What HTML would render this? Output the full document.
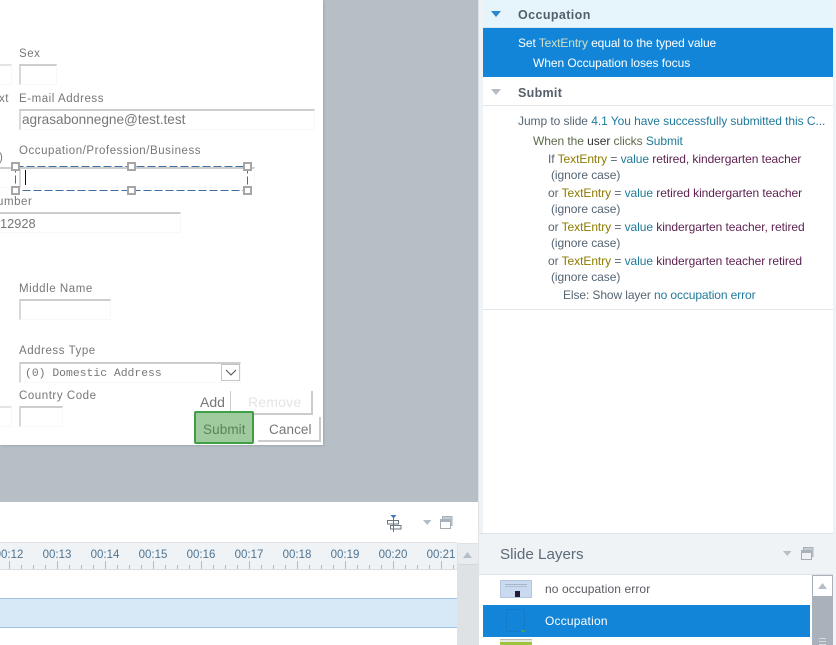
<!DOCTYPE html>
<html>
<head>
<meta charset="utf-8">
<style>
html,body{margin:0;padding:0;background:#fff}
#p{position:relative;width:836px;height:645px;overflow:hidden;background:#fff;font-family:"Liberation Sans",sans-serif}
#p div{position:absolute}
.t{white-space:nowrap;font-size:12px;line-height:16px;letter-spacing:-.06px}
.l{white-space:nowrap;font-size:11.5px;line-height:14px;color:#777;letter-spacing:.55px}
.f{box-sizing:border-box;background:#fff;border:1px solid #f8f8f8;border-top:2px solid #cdcdcd;border-left:2px solid #d8d8d8}
.h{box-sizing:border-box;width:9px;height:9px;background:#fff;border:2px solid #a6a6a6}
.g{color:#566573}.b{color:#1f7a99}.y{color:#8c7a00}.m{color:#5c1f4f}
.c{white-space:nowrap;font-size:11.5px;line-height:14px;color:#4f7391;width:48px;text-align:center}
</style>
</head>
<body>
<div id="p">
<!-- stage -->
<div style="left:0;top:0;width:478px;height:502px;background:#b6bec6"></div>
<div style="left:0;top:0;width:323px;height:445px;background:#fff;box-shadow:1px 1px 2px #a0a8b0"></div>

<div class="l" style="left:19px;top:47px">Sex</div>
<div class="f" style="left:-20px;top:64px;width:32px;height:21px;border-top-color:#e4e4e4"></div>
<div class="f" style="left:19px;top:64px;width:38px;height:21px"></div>
<div class="l" style="left:-1px;top:92px">xt</div>
<div class="l" style="left:19px;top:92px">E-mail Address</div>
<div class="f" style="left:19px;top:109px;width:296px;height:21px"></div>
<div class="t" style="left:22px;top:112px;font-size:13.6px;letter-spacing:0;color:#777">agrasabonnegne@test.test</div>
<div class="l" style="left:-1px;top:151px;letter-spacing:0">)</div>
<div class="l" style="left:19px;top:144px">Occupation/Profession/Business</div>
<div class="f" style="left:-20px;top:167px;width:36px;height:21px;border-left:0"></div>
<div class="f" style="left:19px;top:167px;width:236px;height:21px"></div>
<div style="left:25px;top:170px;width:1px;height:15px;background:#111"></div>
<svg style="position:absolute;left:10px;top:160px" width="245" height="36">
  <path d="M5.500 6.500H237.500V30.500H5.500Z" fill="none" stroke="#3f6d9e" stroke-width="1" stroke-dasharray="8 3"/>
</svg>
<div class="h" style="left:11px;top:162px"></div>
<div class="h" style="left:127px;top:162px"></div>
<div class="h" style="left:243px;top:162px"></div>
<div class="h" style="left:11px;top:186px"></div>
<div class="h" style="left:127px;top:186px"></div>
<div class="h" style="left:243px;top:186px"></div>
<div class="l" style="left:-3px;top:195px">umber</div>
<div class="f" style="left:-20px;top:212px;width:201px;height:21px;border-left:0"></div>
<div class="t" style="left:0;top:216px;font-size:12.8px;letter-spacing:0;color:#777">12928</div>

<div class="l" style="left:19px;top:282px">Middle Name</div>
<div class="f" style="left:19px;top:299px;width:92px;height:21px"></div>
<div class="l" style="left:19px;top:344px">Address Type</div>
<div class="f" style="left:19px;top:362px;width:222px;height:21px"></div>
<div class="t" style="left:25px;top:366px;font-family:'Liberation Mono',monospace;font-size:11.4px;letter-spacing:0;color:#777">(0) Domestic Address</div>
<div style="left:221px;top:364px;width:19px;height:17px;box-sizing:border-box;border:1px solid #c4c4c4;background:#fff">
  <svg style="position:absolute;left:3px;top:3px" width="12" height="9"><path d="M1 2l5 5 5-5" fill="none" stroke="#555" stroke-width="1.100"/></svg>
</div>
<div class="l" style="left:19px;top:389px">Country Code</div>
<div class="f" style="left:-20px;top:406px;width:32px;height:21px;border-top-color:#e4e4e4"></div>
<div class="f" style="left:19px;top:406px;width:44px;height:21px"></div>
<div class="t" style="left:200px;top:394px;font-size:14px;letter-spacing:0;color:#777">Add</div>
<div style="left:230px;top:391px;width:83px;height:24px;box-sizing:border-box;border-left:1px solid #ccc;border-right:2px solid #ccc;border-bottom:2px solid #ccc"></div>
<div class="t" style="left:248px;top:394px;font-size:14px;color:#e4e4e4;letter-spacing:.2px">Remove</div>
<div style="left:194px;top:411px;width:60px;height:33px;box-sizing:border-box;background:#9fcb9f;border:2px solid #3f9f46;border-radius:2px"></div>
<div class="t" style="left:203px;top:422px;font-size:13.5px;color:#5c815c;letter-spacing:.1px">Submit</div>
<div style="left:258px;top:417px;width:63px;height:25px;box-sizing:border-box;border-right:2px solid #ccc;border-bottom:2px solid #ccc"></div>
<div class="t" style="left:269px;top:422px;font-size:13.5px;color:#777;letter-spacing:.1px">Cancel</div>

<!-- timeline -->
<div style="left:0;top:502px;width:478px;height:143px;background:#fff"></div>
<svg style="position:absolute;left:385px;top:513px" width="20" height="20">
  <path d="M8.500 2v17" stroke="#4c78ab" stroke-width="1" fill="none"/>
  <path d="M5.500 2h6l-3 3.500z" fill="#3f76bd"/>
  <rect x="2.500" y="7.500" width="11" height="3.500" fill="none" stroke="#6b7680"/>
  <rect x="5.500" y="12.500" width="10.500" height="3.500" fill="none" stroke="#6b7680"/>
</svg>
<svg style="position:absolute;left:422px;top:519px" width="11" height="7"><path d="M1 1h8.500l-4.250 5z" fill="#b5bec6"/></svg>
<svg style="position:absolute;left:439px;top:515px" width="15" height="15">
  <rect x="3.500" y="1.500" width="9.500" height="9" fill="#c4cbd1" stroke="#a9b2ba"/>
  <rect x="1.500" y="4.500" width="10" height="9" fill="#fff" stroke="#a3acb4"/>
  <rect x="1" y="4" width="11" height="3" fill="#a9b2ba"/>
</svg>

<div style="left:0;top:542px;width:457px;height:28px;box-sizing:border-box;background:#f0f3f6;border-top:1px solid #e0e2e5;border-bottom:1px solid #dcdfe2"></div>
<div class="c" style="left:-15px;top:548px">00:12</div>
<div class="c" style="left:33px;top:548px">00:13</div>
<div class="c" style="left:81px;top:548px">00:14</div>
<div class="c" style="left:129px;top:548px">00:15</div>
<div class="c" style="left:177px;top:548px">00:16</div>
<div class="c" style="left:225px;top:548px">00:17</div>
<div class="c" style="left:273px;top:548px">00:18</div>
<div class="c" style="left:321px;top:548px">00:19</div>
<div class="c" style="left:369px;top:548px">00:20</div>
<div class="c" style="left:417px;top:548px">00:21</div>
<svg style="position:absolute;left:0;top:560px" width="457" height="9">
  <path stroke="#b4bac0" stroke-width="1" fill="none" d="M9.500 1v8M57.500 1v8M105.500 1v8M153.500 1v8M201.500 1v8M249.500 1v8M297.500 1v8M345.500 1v8M393.500 1v8M441.500 1v8M21.500 5v4M33.500 5v4M45.500 5v4M69.500 5v4M81.500 5v4M93.500 5v4M117.500 5v4M129.500 5v4M141.500 5v4M165.500 5v4M177.500 5v4M189.500 5v4M213.500 5v4M225.500 5v4M237.500 5v4M261.500 5v4M273.500 5v4M285.500 5v4M309.500 5v4M321.500 5v4M333.500 5v4M357.500 5v4M369.500 5v4M381.500 5v4M405.500 5v4M417.500 5v4M429.500 5v4M453.500 5v4"/>
</svg>
<div style="left:0;top:598px;width:457px;height:30px;box-sizing:border-box;background:#d7e8f7;border-top:1px solid #9fc3e3;border-bottom:1px solid #9fc3e3"></div>
<div style="left:457px;top:543px;width:21px;height:102px;background:#dfe2e5"></div>
<div style="left:458px;top:544px;width:20px;height:20px;background:#e9ecef;border-bottom:1px solid #d2d6da"></div>
<svg style="position:absolute;left:462px;top:551px" width="12" height="8"><path d="M5.500 1l4.500 6h-9z" fill="#b5bec6"/></svg>

<!-- right panel -->
<div style="left:478px;top:0;width:358px;height:645px;background:#fff"></div>
<div style="left:478px;top:0;width:1px;height:645px;background:#dfe2e5"></div>
<div style="left:479px;top:0;width:4px;height:533px;background:#f0f3f6"></div>
<div style="left:833px;top:0;width:3px;height:645px;background:#f0f3f6"></div>

<div style="left:483px;top:0;width:350px;height:27px;background:#e6f4fb"></div>
<div style="left:483px;top:27px;width:350px;height:1px;background:#d4e6f0"></div>
<svg style="position:absolute;left:491px;top:11px" width="12" height="8"><path d="M0 0h10l-5 6z" fill="#2a86d0"/></svg>
<div class="t" style="left:518px;top:7px;font-weight:bold;font-size:12.5px;color:#555f69;letter-spacing:.4px">Occupation</div>
<div style="left:483px;top:28px;width:350px;height:49px;background:#1385d8"></div>
<div class="t" style="left:518px;top:35px;color:#fff;letter-spacing:-.1px">Set <span style="color:#cfe0c8">TextEntry</span> equal to the typed value</div>
<div class="t" style="left:533px;top:55px;color:#fff">When Occupation loses focus</div>

<svg style="position:absolute;left:491px;top:89px" width="12" height="8"><path d="M0 0h10l-5 6z" fill="#b5bbc1"/></svg>
<div class="t" style="left:518px;top:85px;font-weight:bold;font-size:12.5px;color:#555f69;letter-spacing:.3px">Submit</div>
<div style="left:483px;top:105px;width:350px;height:1px;background:#e3e6e9"></div>

<div class="t g" style="left:518px;top:113px;letter-spacing:-.06px">Jump to slide <span class="b">4.1 You have successfully submitted this C...</span></div>
<div class="t" style="left:533px;top:133px;color:#5d6a4a">When the <span style="color:#333">user</span> clicks <span class="b">Submit</span></div>
<div class="t g" style="left:548px;top:151px">If <span class="y">TextEntry</span> = <span class="b">value</span> <span class="m">retired, kindergarten teacher</span></div>
<div class="t g" style="left:551px;top:167px">(ignore case)</div>
<div class="t g" style="left:548px;top:185px">or <span class="y">TextEntry</span> = <span class="b">value</span> <span class="m">retired kindergarten teacher</span></div>
<div class="t g" style="left:551px;top:201px">(ignore case)</div>
<div class="t g" style="left:548px;top:219px">or <span class="y">TextEntry</span> = <span class="b">value</span> <span class="m">kindergarten teacher, retired</span></div>
<div class="t g" style="left:551px;top:235px">(ignore case)</div>
<div class="t g" style="left:548px;top:253px">or <span class="y">TextEntry</span> = <span class="b">value</span> <span class="m">kindergarten teacher retired</span></div>
<div class="t g" style="left:551px;top:269px">(ignore case)</div>
<div class="t g" style="left:563px;top:287px;letter-spacing:-.1px">Else: Show layer <span class="b">no occupation error</span></div>
<div style="left:483px;top:309px;width:350px;height:1px;background:#e3e6e9"></div>

<!-- slide layers -->
<div style="left:479px;top:533px;width:354px;height:42px;box-sizing:border-box;background:#f0f3f6;border-top:1px solid #dfe2e5;border-bottom:1px solid #dfe2e5"></div>
<div class="t" style="left:500px;top:545px;font-size:15.2px;line-height:20px;color:#5c6b78;letter-spacing:0">Slide Layers</div>
<svg style="position:absolute;left:782px;top:550px" width="11" height="7"><path d="M1 1h8.500l-4.250 5z" fill="#b5bec6"/></svg>
<svg style="position:absolute;left:800px;top:546px" width="15" height="15">
  <rect x="3.500" y="1.500" width="9.500" height="9" fill="#c4cbd1" stroke="#a9b2ba"/>
  <rect x="1.500" y="4.500" width="10" height="9" fill="#f0f3f6" stroke="#a3acb4"/>
  <rect x="1" y="4" width="11" height="3" fill="#a9b2ba"/>
</svg>
<div style="left:500px;top:580px;width:32px;height:18px;background:#c9daf0;box-sizing:border-box;border:1px solid #b4c6dc"></div>
<div style="left:505px;top:584px;width:22px;height:1px;background:#a6b4c6;box-shadow:0 2px 0 #b4c0d0"></div>
<div style="left:515px;top:591px;width:5px;height:6px;background:#25183a"></div>
<div class="t" style="left:545px;top:581px;color:#5a5a64;letter-spacing:.1px">no occupation error</div>
<div style="left:483px;top:605px;width:327px;height:32px;background:#1385d8"></div>
<div style="left:506px;top:609px;width:19px;height:23px;box-sizing:border-box;border:1px solid #117cca"></div>
<div style="left:521px;top:630px;width:4px;height:2px;background:#3f9f6a"></div>
<div class="t" style="left:545px;top:613px;color:#fff;letter-spacing:.2px">Occupation</div>
<div style="left:500px;top:639px;width:32px;height:2px;background:#e4e8dc;border-top:1px solid #bbb"></div>
<div style="left:500px;top:642px;width:32px;height:3px;background:#9cc43c"></div>
<div style="left:812px;top:575px;width:21px;height:70px;background:#a9b2ba"></div>
<div style="left:813px;top:576px;width:19px;height:20px;background:#fff"></div>
<svg style="position:absolute;left:817px;top:582px" width="12" height="8"><path d="M5.500 1l4.500 6h-9z" fill="#b5bec6"/></svg>
<div style="left:819px;top:638px;width:7px;height:1px;background:#d5d9dd;box-shadow:0 3px 0 #d5d9dd,0 6px 0 #d5d9dd"></div>
</div>
</body>
</html>
